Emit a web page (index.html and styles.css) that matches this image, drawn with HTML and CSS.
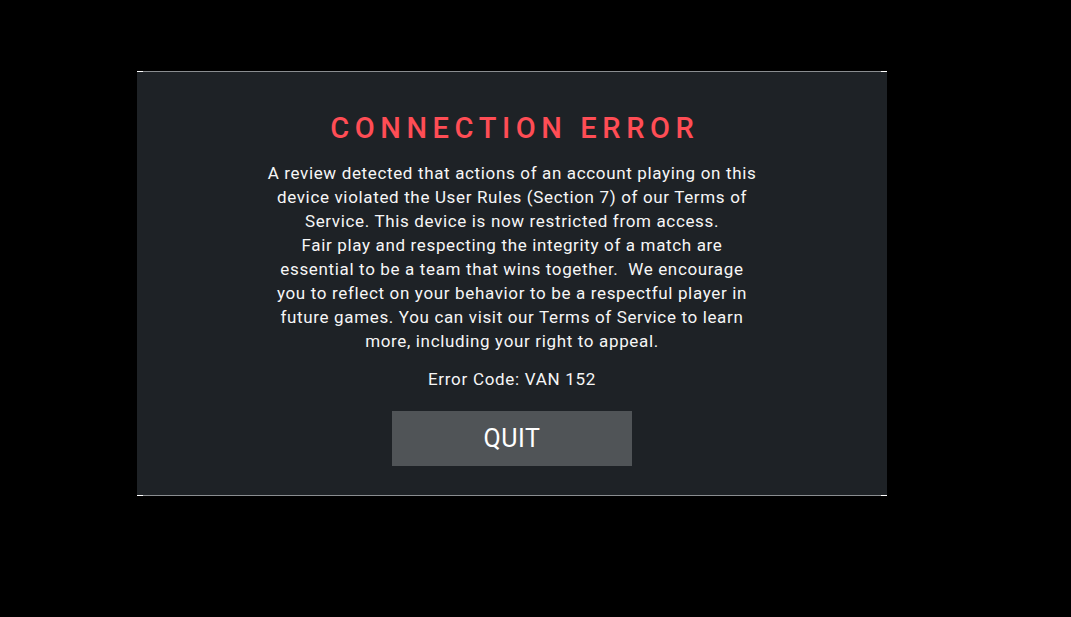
FILE: index.html
```html
<!DOCTYPE html>
<html lang="en">
<head>
    <meta charset="UTF-8">
    <title>Connection Error</title>
    <link rel="stylesheet" href="styles.css">
</head>
<body>
    <div class="dialog">
        <h1 class="title">CONNECTION ERROR</h1>
        <p class="message">
            A review detected that actions of an account playing on this<br>
            device violated the User Rules (Section 7) of our Terms of<br>
            Service. This device is now restricted from access.<br>
            Fair play and respecting the integrity of a match are<br>
            essential to be a team that wins together.&nbsp; We encourage<br>
            you to reflect on your behavior to be a respectful player in<br>
            future games. You can visit our Terms of Service to learn<br>
            more, including your right to appeal.
        </p>
        <p class="code">Error Code: VAN 152</p>
        <button class="quit">QUIT</button>
    </div>
</body>
</html>
```

FILE: styles.css
```css
html, body {
    margin: 0;
    background: #000;
}
body {
    font-family: Roboto, "Liberation Sans", sans-serif;
    color: #f6f6f6;
    padding: 71px 0 0 137px;
}
.dialog {
    position: relative;
    box-sizing: border-box;
    width: 750px;
    height: 425px;
    background: #1e2226;
    border-top: 1px solid #8a8d90;
    border-bottom: 1px solid #8a8d90;
    display: flex;
    flex-direction: column;
    align-items: center;
    padding-top: 38px;
}
.dialog::before,
.dialog::after {
    content: "";
    position: absolute;
    left: 0;
    right: 0;
    height: 1px;
    background:
        linear-gradient(#fff, #fff) left / 6px 1px no-repeat,
        linear-gradient(#fff, #fff) right / 6px 1px no-repeat;
}
.dialog::before { top: -1px; }
.dialog::after { bottom: -1px; }
.title {
    margin: 0;
    padding-left: 5.6px;
    font-size: 29px;
    font-weight: 500;
    letter-spacing: 5.6px;
    color: #ff4d55;
    line-height: 36px;
}
.message {
    margin: 15px 0 0;
    font-size: 17px;
    letter-spacing: 0.65px;
    line-height: 24px;
    text-align: center;
}
.code {
    margin: 14px 0 0;
    font-size: 17px;
    letter-spacing: 0.7px;
    line-height: 24px;
}
.quit {
    margin-top: 20px;
    width: 240px;
    height: 55px;
    border: none;
    background: #505457;
    color: #fff;
    font-family: inherit;
    font-size: 25px;
    letter-spacing: 0.5px;
    cursor: pointer;
}
```
